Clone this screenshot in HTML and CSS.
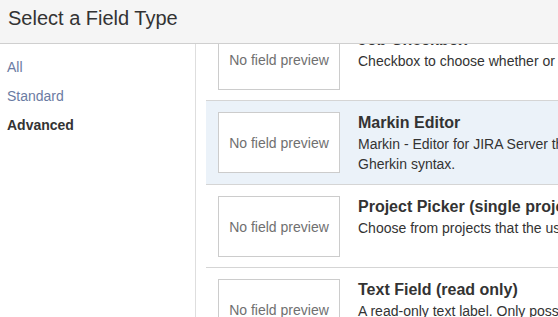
FILE: index.html
```html
<!DOCTYPE html>
<html>
<head>
<meta charset="utf-8">
<link rel="stylesheet" href="styles.css">
</head>
<body>
<div class="dialog">
  <div class="header">Select a Field Type</div>
  <div class="content">
    <nav class="sidebar">
      <a class="nav-item">All</a>
      <a class="nav-item">Standard</a>
      <a class="nav-item active">Advanced</a>
    </nav>
    <div class="main">
      <div class="list">
        <div class="row">
          <div class="preview">No field preview</div>
          <div class="info">
            <div class="title">Job Checkbox</div>
            <div class="desc">Checkbox to choose whether or not the job should be run</div>
          </div>
        </div>
        <div class="row selected">
          <div class="preview">No field preview</div>
          <div class="info">
            <div class="title">Markin Editor</div>
            <div class="desc">Markin - Editor for JIRA Server that supports test scenarios written in<br>Gherkin syntax.</div>
          </div>
        </div>
        <div class="row">
          <div class="preview">No field preview</div>
          <div class="info">
            <div class="title">Project Picker (single project)</div>
            <div class="desc">Choose from projects that the user can view in the system.</div>
          </div>
        </div>
        <div class="row">
          <div class="preview">No field preview</div>
          <div class="info">
            <div class="title">Text Field (read only)</div>
            <div class="desc">A read-only text label. Only possible to set a value programmatically.</div>
          </div>
        </div>
      </div>
    </div>
  </div>
</div>
</body>
</html>
```
FILE: styles.css
```css
html, body {
  margin: 0;
  padding: 0;
  background: #fff;
}
body {
  font-family: "Liberation Sans", Arial, sans-serif;
  color: #333;
  width: 558px;
  height: 317px;
  overflow: hidden;
}
.dialog {
  display: flex;
  flex-direction: column;
  height: 317px;
}
.header {
  height: 43px;
  line-height: 37px;
  padding-left: 8px;
  font-size: 20px;
  color: #333;
  background: #f5f5f5;
  border-bottom: 1px solid #cfcfcf;
  flex: none;
}
.content {
  display: flex;
  flex: 1;
  min-height: 0;
}
.sidebar {
  width: 196px;
  flex: none;
  border-right: 1px solid #dedede;
  padding-top: 9px;
  padding-left: 7px;
  box-sizing: border-box;
  display: flex;
  flex-direction: column;
}
.nav-item {
  font-size: 14px;
  line-height: 29px;
  color: #6b7ba3;
  text-decoration: none;
}
.nav-item.active {
  color: #333;
  font-weight: bold;
}
.main {
  flex: 1;
  overflow: hidden;
  padding-left: 10px;
}
.list {
  width: 800px;
  margin-top: -26px;
}
.row {
  display: flex;
  gap: 18px;
  padding: 11px 0 10px 12px;
  border-bottom: 1px solid #d5d5d5;
}
.row.selected {
  background: #ebf2f9;
}
.preview {
  width: 120px;
  height: 59px;
  flex: none;
  border: 1px solid #cccccc;
  background: #fff;
  display: flex;
  align-items: center;
  justify-content: center;
  font-size: 14px;
  color: #707070;
  white-space: nowrap;
}
.info {
  white-space: nowrap;
}
.title {
  font-size: 16px;
  font-weight: bold;
  line-height: 22px;
  color: #333;
}
.desc {
  font-size: 14px;
  line-height: 20px;
  color: #333;
}
```
